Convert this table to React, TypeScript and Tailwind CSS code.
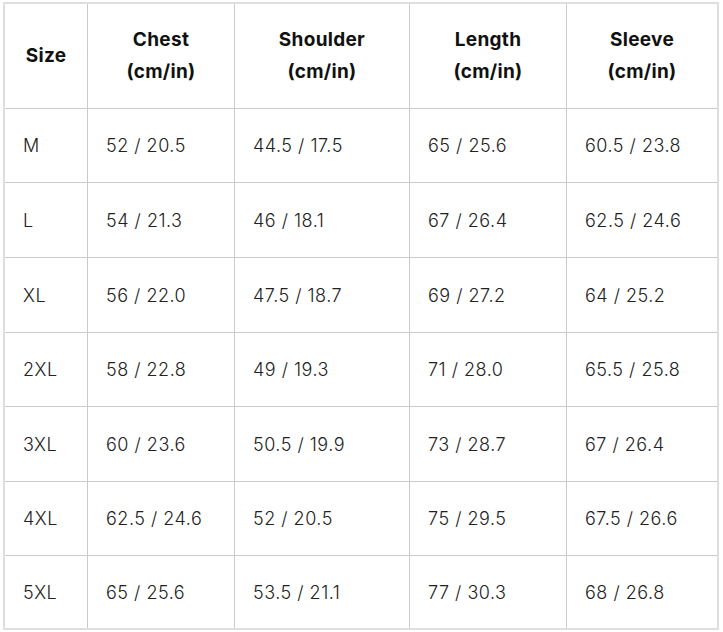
const headers = [
  ["Size"],
  ["Chest", "(cm/in)"],
  ["Shoulder", "(cm/in)"],
  ["Length", "(cm/in)"],
  ["Sleeve", "(cm/in)"],
];

const rows = [
  ["M", "52 / 20.5", "44.5 / 17.5", "65 / 25.6", "60.5 / 23.8"],
  ["L", "54 / 21.3", "46 / 18.1", "67 / 26.4", "62.5 / 24.6"],
  ["XL", "56 / 22.0", "47.5 / 18.7", "69 / 27.2", "64 / 25.2"],
  ["2XL", "58 / 22.8", "49 / 19.3", "71 / 28.0", "65.5 / 25.8"],
  ["3XL", "60 / 23.6", "50.5 / 19.9", "73 / 28.7", "67 / 26.4"],
  ["4XL", "62.5 / 24.6", "52 / 20.5", "75 / 29.5", "67.5 / 26.6"],
  ["5XL", "65 / 25.6", "53.5 / 21.1", "77 / 30.3", "68 / 26.8"],
];

const rowHeights = ["h-[74px]", "h-[75px]", "h-[75px]", "h-[74px]", "h-[75px]", "h-[74px]", "h-[72px]"];

export default function App() {
  return (
    <div className="min-h-screen bg-white pl-[3px] pt-[2px] font-['Inter',sans-serif]">
      <div className="w-[716px] border-2 border-[#dedede]">
        <div className="grid grid-cols-[83px_147px_175px_157px_150px]">
          {headers.map((h, i) => (
            <div
              key={i}
              className={`flex h-[105px] flex-col items-center justify-center border-b border-[#cacaca] text-[19px] font-bold leading-[32px] tracking-[0.3px] text-[#111] ${
                i < 4 ? "border-r" : ""
              }`}
            >
              {h.map((line) => (
                <span key={line}>{line}</span>
              ))}
            </div>
          ))}
          {rows.map((row, r) =>
            row.map((cell, c) => (
              <div
                key={`${r}-${c}`}
                className={`flex items-center border-[#cacaca] pl-[18px] text-[18px] font-light tracking-[0.5px] text-[#222] ${
                  rowHeights[r]
                } ${c < 4 ? "border-r" : ""} ${r < 6 ? "border-b" : ""}`}
              >
                {cell}
              </div>
            ))
          )}
        </div>
      </div>
    </div>
  );
}
